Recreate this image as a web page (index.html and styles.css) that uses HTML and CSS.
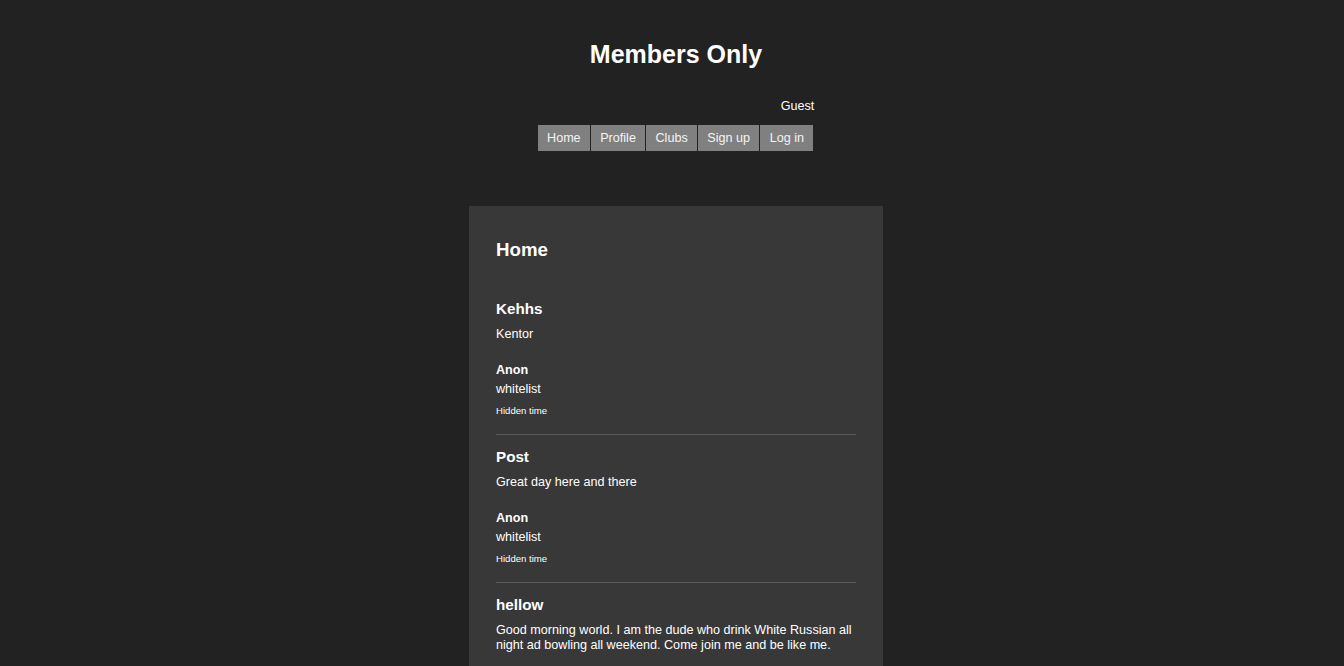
FILE: index.html
```html
<!DOCTYPE html>
<html lang="en">
<head>
<meta charset="utf-8">
<title>Members Only</title>
<link rel="stylesheet" href="styles.css">
</head>
<body>
<header class="site-header">
  <h1 class="site-title">Members Only</h1>
  <div class="userbar">
    <div class="user-name">Guest</div>
    <nav class="nav">
      <a class="nav-link" href="#">Home</a>
      <a class="nav-link" href="#">Profile</a>
      <a class="nav-link" href="#">Clubs</a>
      <a class="nav-link" href="#">Sign up</a>
      <a class="nav-link" href="#">Log in</a>
    </nav>
  </div>
</header>
<main class="card">
  <h2 class="page-title">Home</h2>
  <ul class="posts">
    <li class="post">
      <h3 class="post-title">Kehhs</h3>
      <p class="post-body">Kentor</p>
      <div class="post-meta">
        <div class="post-author">Anon</div>
        <div class="post-club">whitelist</div>
        <div class="post-time">Hidden time</div>
      </div>
    </li>
    <li class="post">
      <h3 class="post-title">Post</h3>
      <p class="post-body">Great day here and there</p>
      <div class="post-meta">
        <div class="post-author">Anon</div>
        <div class="post-club">whitelist</div>
        <div class="post-time">Hidden time</div>
      </div>
    </li>
    <li class="post">
      <h3 class="post-title">hellow</h3>
      <p class="post-body">Good morning world. I am the dude who drink White Russian all night ad bowling all weekend. Come join me and be like me.</p>
      <div class="post-meta">
        <div class="post-author">Anon</div>
        <div class="post-club">whitelist</div>
        <div class="post-time">Hidden time</div>
      </div>
    </li>
  </ul>
</main>
</body>
</html>
```

FILE: styles.css
```css
html, body {
  background: #222222;
}
body {
  margin: 0 0 0 8px;
  color: #ffffff;
  font-family: "Liberation Sans", Arial, sans-serif;
  font-size: 12.6px;
}
.site-header {
  display: flex;
  flex-direction: column;
  align-items: center;
}
.site-title {
  margin: 39px 0 0;
  font-size: 25px;
  line-height: 30px;
  font-weight: bold;
}
.userbar {
  margin-top: 30px;
  display: flex;
  flex-direction: column;
}
.user-name {
  text-align: right;
  line-height: 15px;
}
.nav {
  margin-top: 11px;
  display: flex;
}
.nav-link {
  display: block;
  background: #808080;
  color: #f4f4f4;
  text-decoration: none;
  padding: 0 9.3px;
  height: 26px;
  line-height: 26px;
  margin-right: 1px;
}
.card {
  display: block;
  width: 360px;
  margin: 55px auto 0;
  padding: 33px 27px 20px;
  background: #383838;
}
.page-title {
  margin: 0;
  font-size: 18.7px;
  line-height: 22px;
}
.posts {
  list-style: none;
  margin: 38px 0 0;
  padding: 0;
}
.post {
  padding: 12px 0 17px;
  border-bottom: 1px solid #5a5a5a;
}
.post:first-child {
  padding-top: 0;
}
.post-title {
  margin: 0;
  padding-top: 1px;
  font-size: 15.2px;
  line-height: 18px;
}
.post-body {
  margin: 9px 0 0;
  line-height: 15px;
}
.post-meta {
  margin-top: 19px;
}
.post-author {
  font-weight: bold;
  line-height: 19px;
}
.post-club {
  line-height: 19px;
}
.post-time {
  margin-top: 6px;
  font-size: 9.6px;
  line-height: 12px;
}
```
